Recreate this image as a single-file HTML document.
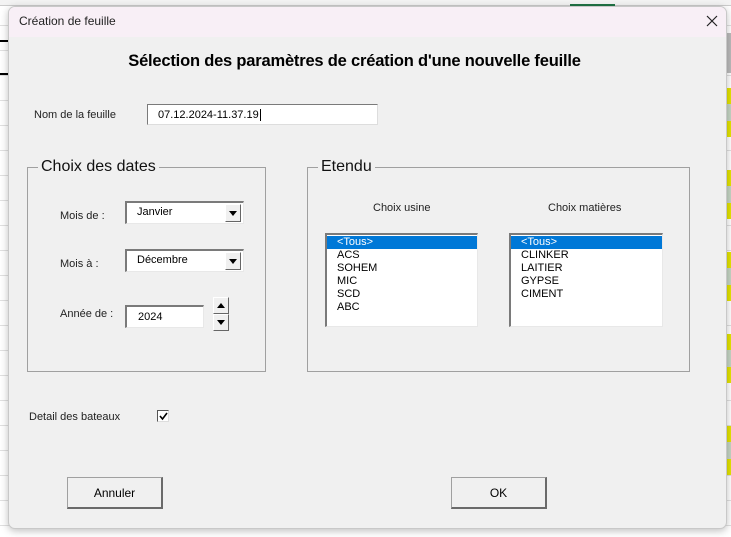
<!DOCTYPE html>
<html><head><meta charset="utf-8"><style>
*{box-sizing:border-box;margin:0;padding:0}
body{width:731px;height:537px;overflow:hidden;position:relative;background:#fff;font-family:"Liberation Sans",sans-serif;color:#000}
.a{position:absolute}
.grid{background-image:linear-gradient(#e0e0e0 1px,transparent 1px);background-size:100% 25px}
.dlg{left:8px;top:6px;width:719px;height:523px;background:#f0f0f0;border:1px solid #c8c8c8;border-radius:7px;box-shadow:0 2px 8px rgba(0,0,0,.25);overflow:hidden}
.title{left:0;top:0;width:719px;height:30px;background:#f8eff6}
.sunk{background:#fff;border-top:2px solid #7a7a7a;border-left:2px solid #7a7a7a;border-right:1px solid #e8e8e8;border-bottom:1px solid #e8e8e8}
.frame{border:1px solid #a0a0a0}
.leg{background:#f0f0f0;font-size:16px;padding:0 3px;color:#111}
.btn{border:1px solid #a0a0a0;border-right:2px solid #6a6a6a;border-bottom:2px solid #6a6a6a;background:#f0f0f0;font-size:12px;display:flex;align-items:center;justify-content:center}
.lbl{font-size:11px;color:#222}
.ddb{width:16px;height:18px;background:#f0f0f0;border:1px solid #fff;border-right:1px solid #666;border-bottom:1px solid #666;display:flex;align-items:center;justify-content:center}
.li{font-size:11px;line-height:13px;padding-left:10px}
.sel{background:#0078d7;color:#fff}
</style></head><body>
<div class="a grid" style="left:0;top:0;width:731px;height:537px"></div>
<div class="a" style="left:0;top:0;width:731px;height:6px;background:#f3f3f3;border-bottom:1px solid #ccc"></div>
<div class="a" style="left:570px;top:4px;width:45px;height:2px;background:#217346"></div>
<div class="a" style="left:0;top:40px;width:8px;height:2px;background:#000"></div>
<div class="a" style="left:0;top:73px;width:8px;height:2px;background:#000"></div>
<div class="a" style="left:726px;top:33px;width:5px;height:40px;background:#bbb"></div>
<div class="a" style="left:727px;top:88px;width:4px;height:16px;background:#e4e400"></div>
<div class="a" style="left:727px;top:104px;width:4px;height:17px;background:#c5d5c3"></div>
<div class="a" style="left:727px;top:121px;width:4px;height:16px;background:#e4e400"></div>
<div class="a" style="left:727px;top:170px;width:4px;height:16px;background:#e4e400"></div>
<div class="a" style="left:727px;top:186px;width:4px;height:17px;background:#c5d5c3"></div>
<div class="a" style="left:727px;top:203px;width:4px;height:16px;background:#e4e400"></div>
<div class="a" style="left:727px;top:252px;width:4px;height:16px;background:#e4e400"></div>
<div class="a" style="left:727px;top:268px;width:4px;height:17px;background:#c5d5c3"></div>
<div class="a" style="left:727px;top:285px;width:4px;height:16px;background:#e4e400"></div>
<div class="a" style="left:727px;top:334px;width:4px;height:16px;background:#e4e400"></div>
<div class="a" style="left:727px;top:350px;width:4px;height:17px;background:#c5d5c3"></div>
<div class="a" style="left:727px;top:367px;width:4px;height:16px;background:#e4e400"></div>
<div class="a" style="left:727px;top:426px;width:4px;height:16px;background:#e4e400"></div>
<div class="a" style="left:727px;top:442px;width:4px;height:17px;background:#c5d5c3"></div>
<div class="a" style="left:727px;top:459px;width:4px;height:16px;background:#e4e400"></div>

<div class="a dlg">
 <div class="a title"></div>
 <div class="a" style="left:10px;top:7px;font-size:12px;color:#222">Création de feuille</div>
 <svg class="a" style="left:697px;top:8px" width="12" height="12"><path d="M1 1L11 11M11 1L1 11" stroke="#222" stroke-width="1.2"/></svg>
 <div class="a" style="left:0;top:45px;width:691px;text-align:center;font-size:16.5px;font-weight:bold;letter-spacing:-0.2px">Sélection des paramètres de création d'une nouvelle feuille</div>
 <div class="a lbl" style="left:25px;top:102px">Nom de la feuille</div>
 <div class="a" style="left:138px;top:97px;width:231px;height:21px;background:#fff;border:1px solid #7a7a7a;border-right-color:#ddd;border-bottom-color:#ddd;font-size:11px;padding:4px 0 0 10px">07.12.2024-11.37.19<span style="border-left:1px solid #000;margin-left:1px"></span></div>

 <div class="a frame" style="left:18px;top:160px;width:239px;height:205px"></div>
 <div class="a leg" style="left:29px;top:151px">Choix des dates</div>
 <div class="a lbl" style="left:51px;top:203px">Mois de :</div>
 <div class="a sunk" style="left:116px;top:194px;width:119px;height:23px;font-size:11px;padding:3px 0 0 10px">Janvier</div>
 <div class="a ddb" style="left:216px;top:197px"><svg width="8" height="5"><path d="M0 0H8L4 5Z" fill="#000"/></svg></div>
 <div class="a lbl" style="left:51px;top:251px">Mois à :</div>
 <div class="a sunk" style="left:116px;top:242px;width:119px;height:23px;font-size:11px;padding:3px 0 0 10px">Décembre</div>
 <div class="a ddb" style="left:216px;top:245px"><svg width="8" height="5"><path d="M0 0H8L4 5Z" fill="#000"/></svg></div>
 <div class="a lbl" style="left:51px;top:301px">Année de :</div>
 <div class="a sunk" style="left:116px;top:298px;width:79px;height:23px;font-size:11px;padding:4px 0 0 11px">2024</div>
 <div class="a ddb" style="left:204px;top:290px;width:16px;height:17px"><svg width="8" height="5"><path d="M0 5H8L4 0Z" fill="#000"/></svg></div>
 <div class="a ddb" style="left:204px;top:307px;width:16px;height:17px"><svg width="8" height="5"><path d="M0 0H8L4 5Z" fill="#000"/></svg></div>

 <div class="a frame" style="left:298px;top:160px;width:383px;height:205px"></div>
 <div class="a leg" style="left:309px;top:151px">Etendu</div>
 <div class="a lbl" style="left:364px;top:195px">Choix usine</div>
 <div class="a lbl" style="left:539px;top:195px">Choix matières</div>
 <div class="a sunk" style="left:316px;top:226px;width:153px;height:94px;padding-top:1px">
  <div class="li sel">&lt;Tous&gt;</div><div class="li">ACS</div><div class="li">SOHEM</div><div class="li">MIC</div><div class="li">SCD</div><div class="li">ABC</div>
 </div>
 <div class="a sunk" style="left:500px;top:226px;width:154px;height:94px;padding-top:1px">
  <div class="li sel">&lt;Tous&gt;</div><div class="li">CLINKER</div><div class="li">LAITIER</div><div class="li">GYPSE</div><div class="li">CIMENT</div>
 </div>

 <div class="a lbl" style="left:20px;top:404px">Detail des bateaux</div>
 <div class="a" style="left:148px;top:403px;width:12px;height:12px;background:#fff;border:1px solid #555;border-right-color:#ddd;border-bottom-color:#ddd"></div>
 <svg class="a" style="left:150px;top:405px" width="9" height="9"><path d="M1 4L3.5 7L8 1" stroke="#000" stroke-width="1.6" fill="none"/></svg>

 <div class="a btn" style="left:58px;top:470px;width:96px;height:32px">Annuler</div>
 <div class="a btn" style="left:442px;top:470px;width:96px;height:32px">OK</div>
</div>
</body></html>
